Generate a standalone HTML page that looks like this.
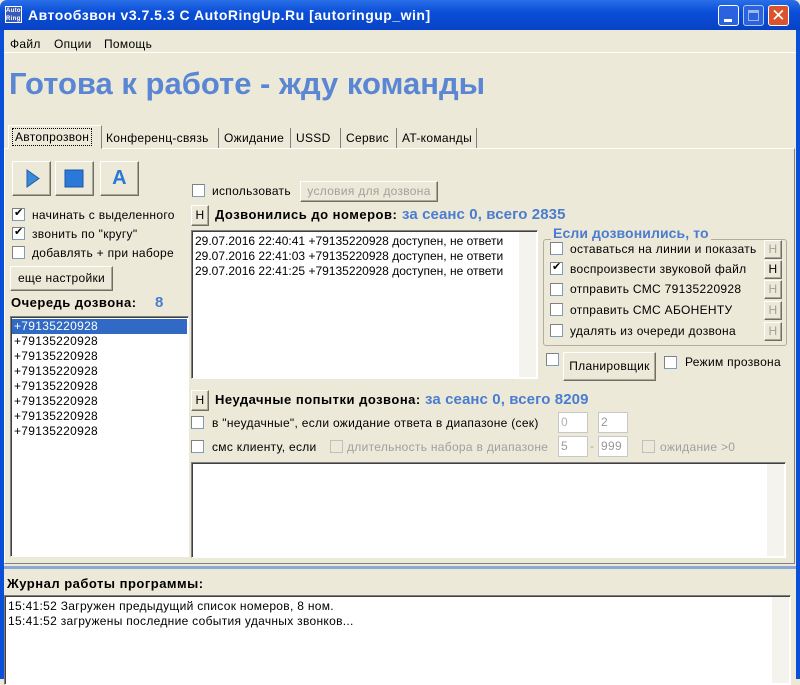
<!DOCTYPE html>
<html><head><meta charset="utf-8"><style>
*{margin:0;padding:0;box-sizing:border-box}
body{width:800px;height:679px;overflow:hidden;background:#ece9d8;font-family:"Liberation Sans","DejaVu Sans",sans-serif;font-size:12px;color:#000;position:relative;letter-spacing:0.3px}
.a{position:absolute;white-space:nowrap}
.title{left:0;top:0;width:800px;height:30px;background:linear-gradient(#2a6fe8,#0a4fd8 40%,#0842c4);border-radius:7px 7px 0 0}
.frame{top:30px;width:4px;height:649px;background:#0a4fd8}
.cb{position:absolute;width:13px;height:13px;background:#fff;border:1px solid #7f9db9;border-top-color:#808080;border-left-color:#808080}
.cb.dis{background:#ece9d8;border-color:#c0c0c0}
.chk:after{content:"✔";position:absolute;left:1px;top:-3px;font-size:11px;color:#000}
.btn{position:absolute;background:#ece9d8;border:1px solid;border-color:#fff #716f64 #716f64 #fff;box-shadow:inset -1px -1px #aca899;text-align:center}
.box{position:absolute;background:#fff;border:1px solid;border-color:#808080 #fff #fff #808080;box-shadow:inset 1px 1px #404040}
.sb{position:absolute;right:1px;top:1px;bottom:1px;width:17px;background:#f4f3ee}
.blue{color:#4a7ccf;font-weight:bold;font-size:15px;letter-spacing:0.1px}
.b{font-weight:bold;font-size:13px;letter-spacing:0.5px}
.g{color:#a0a0a0}
.inp{position:absolute;width:30px;height:21px;background:#fff;border:1px solid #c8c8c8;color:#b0b0b0;padding:2px 2px;font-size:12px}
</style></head><body>
<div class="a title"></div>
<div class="a" style="left:5px;top:6px;width:17px;height:17px;background:#3a5ab8;border:1px solid #fff;font-size:6px;color:#fff;font-weight:bold;line-height:8px">Auto<br>Ring</div>
<div class="a" style="left:28px;top:7px;color:#fff;font-weight:bold;font-size:14px;letter-spacing:0.5px">Автообзвон v3.7.5.3 C AutoRingUp.Ru [autoringup_win]</div>
<div class="a" style="left:718px;top:5px;width:21px;height:21px;background:#2a62e0;border:1px solid #fff;border-radius:3px"><div style="position:absolute;left:5px;top:13px;width:8px;height:3px;background:#fff"></div></div>
<div class="a" style="left:743px;top:5px;width:21px;height:21px;background:#2a62e0;border:1px solid #b0c8f0;border-radius:3px"><div style="position:absolute;left:4px;top:4px;width:11px;height:11px;border:1px solid #a0b8e8;border-top-width:3px"></div></div>
<div class="a" style="left:768px;top:5px;width:21px;height:21px;background:#d9542c;border:1px solid #fff;border-radius:3px;color:#fff;font-size:17px;line-height:19px;text-align:center">✕</div>
<div class="a frame" style="left:0"></div><div class="a frame" style="left:796px"></div>

<div class="a" style="left:10px;top:37px">Файл</div>
<div class="a" style="left:54px;top:37px">Опции</div>
<div class="a" style="left:104px;top:37px">Помощь</div>
<div class="a" style="left:4px;top:52px;width:792px;height:1px;background:#fff"></div>
<div class="a" style="left:9px;top:66px;font-size:31px;font-weight:bold;color:#5a86d4;letter-spacing:0">Готова к работе - жду команды</div>

<div class="a" style="left:4px;top:148px;width:791px;height:416px;border:1px solid;border-color:#fff #808080 #808080 #fff"></div>
<div class="a" style="left:8px;top:125px;width:94px;height:24px;border:1px solid;border-color:#fff #808080 #ece9d8 #fff;background:#ece9d8"></div>
<div class="a" style="left:12px;top:128px;padding:1px 2px;border:1px dotted #000">Автопрозвон</div>
<div class="a" style="left:106px;top:131px">Конференц-связь</div>
<div class="a" style="left:218px;top:128px;height:20px;border-left:1px solid #808080;padding-left:5px;padding-top:3px">Ожидание</div>
<div class="a" style="left:290px;top:128px;height:20px;border-left:1px solid #808080;padding-left:5px;padding-top:3px">USSD</div>
<div class="a" style="left:340px;top:128px;height:20px;border-left:1px solid #808080;padding-left:5px;padding-top:3px">Сервис</div>
<div class="a" style="left:396px;top:128px;height:20px;border-left:1px solid #808080;border-right:1px solid #808080;padding:3px 4px 0 5px">AT-команды</div>

<div class="btn" style="left:12px;top:161px;width:39px;height:35px"><svg width="37" height="33"><path d="M14 8 L26 16.5 L14 25Z" fill="#3a8ad8" stroke="#2060a8"/></svg></div>
<div class="btn" style="left:55px;top:161px;width:39px;height:35px"><svg width="37" height="33"><rect x="9" y="8" width="18" height="17" fill="#2a78d8" stroke="#1a58a8"/></svg></div>
<div class="btn" style="left:100px;top:161px;width:39px;height:35px;color:#2a78d8;font-weight:bold;font-size:20px;line-height:32px">A</div>

<div class="cb chk" style="left:12px;top:208px"></div><div class="a" style="left:32px;top:208px">начинать с выделенного</div>
<div class="cb chk" style="left:12px;top:227px"></div><div class="a" style="left:32px;top:227px">звонить по "кругу"</div>
<div class="cb" style="left:12px;top:246px"></div><div class="a" style="left:32px;top:246px">добавлять + при наборе</div>
<div class="btn" style="left:10px;top:266px;width:103px;height:25px;line-height:22px">еще настройки</div>
<div class="a b" style="left:11px;top:295px">Очередь дозвона:</div>
<div class="a blue" style="left:155px;top:294px">8</div>
<div class="box" style="left:10px;top:316px;width:179px;height:241px;line-height:15px;padding:2px 3px">
<div style="background:#316ac5;color:#fff;margin:0 -2px;padding-left:2px">+79135220928</div>
<div>+79135220928</div><div>+79135220928</div><div>+79135220928</div><div>+79135220928</div><div>+79135220928</div><div>+79135220928</div><div>+79135220928</div></div>

<div class="cb" style="left:192px;top:184px"></div><div class="a" style="left:212px;top:184px">использовать</div>
<div class="btn g" style="left:300px;top:181px;width:138px;height:21px;line-height:18px">условия для дозвона</div>
<div class="btn" style="left:191px;top:205px;width:18px;height:21px;line-height:19px">H</div>
<div class="a b" style="left:215px;top:207px">Дозвонились до номеров:</div>
<div class="a blue" style="left:402px;top:206px">за сеанс 0, всего 2835</div>
<div class="box" style="left:191px;top:230px;width:347px;height:149px;overflow:hidden;line-height:15px;padding:3px 3px;letter-spacing:0">
<div>29.07.2016 22:40:41 +79135220928 доступен, не ответи</div>
<div>29.07.2016 22:41:03 +79135220928 доступен, не ответи</div>
<div>29.07.2016 22:41:25 +79135220928 доступен, не ответи</div>
<div class="sb"></div></div>

<div class="a" style="left:543px;top:239px;width:244px;height:107px;border:1px solid #b0aea0;border-radius:3px"></div>
<div class="a blue" style="left:551px;top:225px;background:#ece9d8;padding:0 2px;font-size:14px">Если дозвонились, то</div>
<div class="cb" style="left:550px;top:242px"></div><div class="a" style="left:570px;top:242px">оставаться на линии и показать</div>
<div class="cb chk" style="left:550px;top:262px"></div><div class="a" style="left:570px;top:262px">воспроизвести звуковой файл</div>
<div class="cb" style="left:550px;top:283px"></div><div class="a" style="left:570px;top:282px">отправить СМС 79135220928</div>
<div class="cb" style="left:550px;top:303px"></div><div class="a" style="left:570px;top:303px">отправить СМС АБОНЕНТУ</div>
<div class="cb" style="left:550px;top:324px"></div><div class="a" style="left:570px;top:324px">удалять из очереди дозвона</div>
<div class="btn g" style="left:764px;top:240px;width:18px;height:19px;line-height:17px">H</div>
<div class="btn" style="left:764px;top:260px;width:18px;height:19px;line-height:17px">H</div>
<div class="btn g" style="left:764px;top:280px;width:18px;height:19px;line-height:17px">H</div>
<div class="btn g" style="left:764px;top:301px;width:18px;height:19px;line-height:17px">H</div>
<div class="btn g" style="left:764px;top:322px;width:18px;height:19px;line-height:17px">H</div>
<div class="cb" style="left:546px;top:353px"></div>
<div class="btn" style="left:563px;top:352px;width:93px;height:29px;line-height:27px">Планировщик</div>
<div class="cb" style="left:664px;top:356px"></div><div class="a" style="left:685px;top:355px">Режим прозвона</div>

<div class="btn" style="left:191px;top:390px;width:18px;height:21px;line-height:19px">H</div>
<div class="a b" style="left:215px;top:392px">Неудачные попытки дозвона:</div>
<div class="a blue" style="left:425px;top:391px">за сеанс 0, всего 8209</div>
<div class="cb" style="left:191px;top:416px"></div><div class="a" style="left:212px;top:416px">в "неудачные", если ожидание ответа в диапазоне (сек)</div>
<div class="inp" style="left:558px;top:412px">0</div><div class="inp" style="left:598px;top:412px;color:#999">2</div>
<div class="cb" style="left:191px;top:440px"></div><div class="a" style="left:212px;top:440px">смс клиенту, если</div>
<div class="cb dis" style="left:330px;top:440px"></div><div class="a g" style="left:347px;top:440px">длительность набора в диапазоне</div>
<div class="inp" style="left:558px;top:436px;color:#999">5</div><div class="a g" style="left:590px;top:439px">-</div><div class="inp" style="left:598px;top:436px;color:#999">999</div>
<div class="cb dis" style="left:642px;top:440px"></div><div class="a g" style="left:660px;top:440px">ожидание &gt;0</div>
<div class="box" style="left:191px;top:462px;width:595px;height:96px"><div class="sb"></div></div>

<div class="a" style="left:4px;top:566px;width:792px;height:3px;background:#8aa8d8"></div>
<div class="a b" style="left:7px;top:576px">Журнал работы программы:</div>
<div class="box" style="left:4px;top:595px;width:787px;height:90px;line-height:15px;padding:3px 3px">
<div>15:41:52 Загружен предыдущий список номеров, 8 ном.</div>
<div>15:41:52 загружены последние события удачных звонков...</div>
<div class="sb"></div></div>
</body></html>
